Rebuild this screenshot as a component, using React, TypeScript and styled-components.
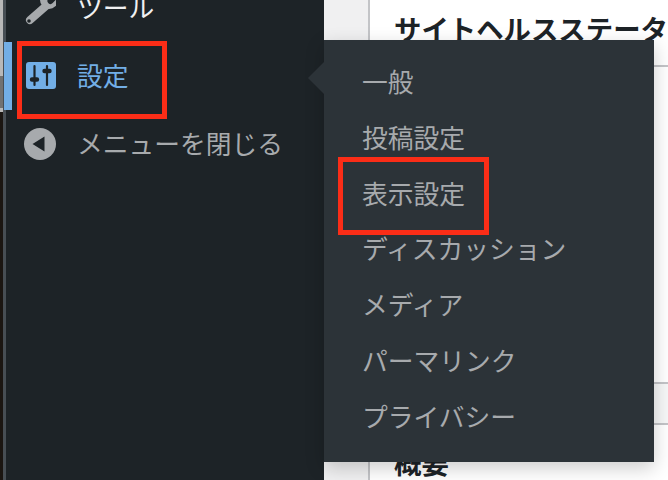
import { createGlobalStyle } from "styled-components";
import styled from "styled-components";

const GlobalStyle = createGlobalStyle`
    html, body {
        margin: 0;
        padding: 0;
        height: 100%;
        background: #f0f0f1;
        overflow: hidden;
    }
    body {
        font-family: "Noto Sans CJK JP", "Noto Sans", sans-serif;
    }
`;

const Page = styled.div`
    position: relative;
    display: flex;
    width: 668px;
    height: 480px;
    overflow: hidden;
`;

const DesktopStrip = styled.div`
    display: flex;
    flex-direction: column;
    flex: 0 0 3px;
`;

const StripPart = styled.div<{ $color: string; $height?: number }>`
    background: ${(props) => props.$color};
    height: ${(props) => (props.$height ? `${props.$height}px` : "auto")};
    flex: ${(props) => (props.$height ? "none" : 1)};
`;

const Sidebar = styled.nav`
    flex: 0 0 318px;
    background: #1d2327;
    border-left: 3px solid #474e54;
    margin-top: -26px;
    display: flex;
    flex-direction: column;
`;

const MenuRow = styled.div<{ $active?: boolean; $color: string }>`
    position: relative;
    height: 68px;
    display: flex;
    align-items: center;
    gap: 21px;
    padding-left: 18px;
    color: ${(props) => props.$color};
    font-size: 25.75px;
    line-height: 1;

    ${(props) =>
        props.$active &&
        `&::before {
            content: "";
            position: absolute;
            left: -2px;
            top: 0;
            bottom: 0;
            width: 8px;
            background: #72aee6;
        }`}
`;

const MenuLabel = styled.span`
    padding-bottom: 2px;
`;

const IconSlot = styled.span`
    width: 32px;
    height: 34px;
    display: flex;
    svg {
        display: block;
    }
`;

const Content = styled.main`
    flex: 1;
    display: flex;
    padding-left: 44px;
    background: #f0f0f1;
`;

const Panel = styled.section`
    flex: 1;
    background: #fff;
    border-left: 2px solid #c3c4c7;
    display: flex;
    flex-direction: column;
    min-width: 0;
`;

const PanelHeader = styled.header`
    height: 65px;
    flex: none;
    border-bottom: 2px solid #c3c4c7;
    padding-left: 24px;
    white-space: nowrap;
    overflow: hidden;
`;

const PanelTitle = styled.h1`
    margin: 0;
    padding-top: 10px;
    font-size: 27.4px;
    line-height: 36px;
    font-weight: 700;
    color: #1d2327;
`;

const PanelBody = styled.div`
    height: 315px;
    flex: none;
`;

const PanelStrip = styled.div`
    height: 39px;
    flex: none;
    background: #f6f7f7;
    border-top: 2px solid #c3c4c7;
    border-bottom: 2px solid #c3c4c7;
`;

const SectionTitle = styled.h2`
    margin: 0;
    padding: 19px 0 0 24px;
    font-size: 27.4px;
    line-height: 36px;
    font-weight: 700;
    color: #1d2327;
`;

const Flyout = styled.ul`
    position: absolute;
    left: 324px;
    top: 40px;
    width: 330px;
    height: 422px;
    box-sizing: border-box;
    margin: 0;
    padding: 13px 0 0 38px;
    list-style: none;
    background: #2c3338;
    box-shadow: 0 6px 18px rgba(0, 0, 0, 0.2);

    &::before {
        content: "";
        position: absolute;
        left: -16px;
        top: 22px;
        border-style: solid;
        border-width: 16px 16px 16px 0;
        border-color: transparent #2c3338 transparent transparent;
    }
`;

const FlyoutItem = styled.li`
    height: 55.8px;
    display: flex;
    align-items: center;
    font-size: 25.75px;
    line-height: 1;
    color: #a7aaad;
    white-space: nowrap;
`;

const Callout = styled.div<{ $left: number; $top: number; $width: number; $height: number }>`
    position: absolute;
    left: ${(props) => props.$left}px;
    top: ${(props) => props.$top}px;
    width: ${(props) => props.$width}px;
    height: ${(props) => props.$height}px;
    box-sizing: border-box;
    border: 5px solid #fb2d17;
`;

function WrenchIcon() {
    return (
        <svg width="32" height="34" viewBox="0 0 32 34">
            <path d="M6 29 L22 15" stroke="#a7aaad" strokeWidth="8" strokeLinecap="round" />
            <circle cx="25" cy="9" r="9" fill="#a7aaad" />
            <path d="M26.5 10 L36 0" stroke="#1d2327" strokeWidth="6" strokeLinecap="round" />
            <circle cx="5" cy="30" r="1.8" fill="#1d2327" />
        </svg>
    );
}

function SettingsIcon() {
    return (
        <svg width="32" height="34" viewBox="0 0 32 34">
            <rect x="2" y="3" width="30" height="27" rx="3" fill="#72aee6" />
            <path d="M10.5 7 V26 M23 7 V26" stroke="#1d2327" strokeWidth="2.2" strokeLinecap="round" />
            <path d="M8 20.5 H13 M20.5 12 H25.5" stroke="#1d2327" strokeWidth="4.4" strokeLinecap="round" />
        </svg>
    );
}

function CollapseIcon() {
    return (
        <svg width="32" height="34" viewBox="0 0 32 34">
            <circle cx="16" cy="17" r="16" fill="#a7aaad" />
            <path d="M8.5 17 L20.5 9.5 V24.5 Z" fill="#1d2327" />
        </svg>
    );
}

const flyoutItems = ["一般", "投稿設定", "表示設定", "ディスカッション", "メディア", "パーマリンク", "プライバシー"];

export default function App() {
    return (
        <Page>
            <GlobalStyle />
            <DesktopStrip>
                <StripPart $color="#b8b8b8" $height={76} />
                <StripPart $color="#717171" $height={32} />
                <StripPart $color="#b8b8b8" $height={4} />
                <StripPart $color="#1b1612" />
            </DesktopStrip>
            <Sidebar>
                <MenuRow $color="#f0f0f1">
                    <IconSlot>
                        <WrenchIcon />
                    </IconSlot>
                    <MenuLabel>ツール</MenuLabel>
                </MenuRow>
                <MenuRow $color="#72aee6" $active>
                    <IconSlot>
                        <SettingsIcon />
                    </IconSlot>
                    <MenuLabel>設定</MenuLabel>
                </MenuRow>
                <MenuRow $color="#a7aaad">
                    <IconSlot>
                        <CollapseIcon />
                    </IconSlot>
                    <MenuLabel>メニューを閉じる</MenuLabel>
                </MenuRow>
            </Sidebar>
            <Content>
                <Panel>
                    <PanelHeader>
                        <PanelTitle>サイトヘルスステータス</PanelTitle>
                    </PanelHeader>
                    <PanelBody />
                    <PanelStrip />
                    <SectionTitle>概要</SectionTitle>
                </Panel>
            </Content>
            <Flyout>
                {flyoutItems.map((item) => (
                    <FlyoutItem key={item}>{item}</FlyoutItem>
                ))}
            </Flyout>
            <Callout $left={17} $top={41} $width={150} $height={78} />
            <Callout $left={338} $top={157} $width={151} $height={78} />
        </Page>
    );
}
